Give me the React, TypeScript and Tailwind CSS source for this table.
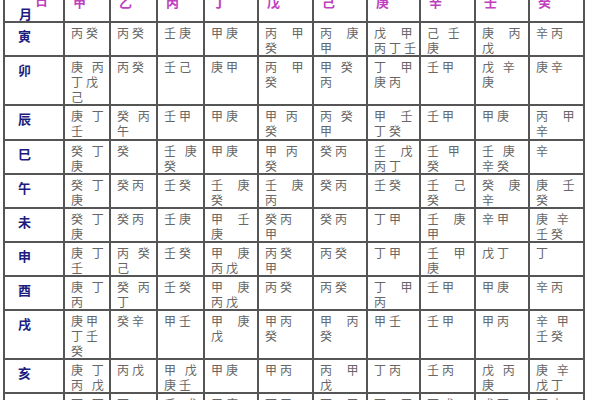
const HEADS = ['甲', '乙', '丙', '丁', '戊', '己', '庚', '辛', '壬', '癸'];

const COL_WIDTHS = [60, 46, 47, 47, 54, 55, 54, 53, 55, 54, 55];

type Row = { branch: string; height: number; cells: string[][] };

// '  ' = wide gap, ' ' = small gap
const ROWS: Row[] = [
  { branch: '寅', height: 33, cells: [['丙癸'], ['丙癸'], ['壬庚'], ['甲庚'], ['丙  甲', '癸'], ['丙  庚', '甲'], ['戊  甲', '丙丁壬'], ['己 壬', '庚'], ['庚  丙', '戊'], ['辛丙']] },
  { branch: '卯', height: 49, cells: [['庚 丙', '丁戊', '己'], ['丙癸'], ['壬己'], ['庚甲'], ['丙  甲', '癸'], ['甲 癸', '丙'], ['丁  甲', '庚丙'], ['壬甲'], ['戊 辛', '庚'], ['庚辛']] },
  { branch: '辰', height: 35, cells: [['庚 丁', '壬'], ['癸 丙', '午'], ['壬甲'], ['甲庚'], ['甲 丙', '癸'], ['丙 癸', '甲'], ['甲  壬', '丁癸'], ['壬甲'], ['甲庚'], ['丙  甲', '辛']] },
  { branch: '巳', height: 33, cells: [['癸 丁', '庚'], ['癸'], ['壬 庚', '癸'], ['甲庚'], ['甲 丙', '癸'], ['癸丙'], ['壬  戊', '丙丁'], ['壬 甲', '癸'], ['壬 庚', '辛癸'], ['辛']] },
  { branch: '午', height: 34, cells: [['癸 丁', '庚'], ['癸丙'], ['壬癸'], ['壬  庚', '癸'], ['壬  庚', '丙'], ['癸丙'], ['壬癸'], ['壬  己', '癸'], ['癸  庚', '辛'], ['庚  壬', '癸']] },
  { branch: '未', height: 33, cells: [['癸 丁', '庚'], ['癸丙'], ['壬庚'], ['甲  壬', '庚'], ['癸丙', '甲'], ['癸丙'], ['丁甲'], ['壬  庚', '甲'], ['辛甲'], ['庚 辛', '壬癸']] },
  { branch: '申', height: 33, cells: [['庚 丁', '壬'], ['丙 癸', '己'], ['壬癸'], ['甲  庚', '丙戊'], ['丙癸', '甲'], ['丙癸'], ['丁甲'], ['壬  甲', '庚'], ['戊丁'], ['丁']] },
  { branch: '酉', height: 34, cells: [['庚 丁', '丙'], ['癸 丙', '丁'], ['壬癸'], ['甲  庚', '丙戊'], ['丙癸'], ['丙癸'], ['丁  甲', '丙'], ['壬甲'], ['甲庚'], ['辛丙']] },
  { branch: '戌', height: 49, cells: [['庚甲', '丁壬', '癸'], ['癸辛'], ['甲壬'], ['甲  庚', '戊'], ['甲丙', '癸'], ['甲  丙', '癸'], ['甲壬'], ['壬甲'], ['甲丙'], ['辛 甲', '壬癸']] },
  { branch: '亥', height: 34, cells: [['庚 丁', '丙 戊'], ['丙戊'], ['甲 戊', '庚壬'], ['甲庚'], ['甲丙'], ['丙  甲', '戊'], ['丁丙'], ['壬丙'], ['戊 丙', '庚'], ['庚 辛', '戊丁']] },
  { branch: '子', height: 40, cells: [['丁 丙', '庚'], ['丙'], ['壬 戊'], ['甲庚'], ['丙甲'], ['丙  甲'], ['丁  甲'], ['丙戊'], ['戊丙'], ['丙辛']] },
];

const cellBorder = 'border-2 border-[#555]';

export default function App() {
  return (
    <div
      className="w-[600px] h-[400px] overflow-hidden bg-white pl-[3px]"
      style={{ fontFamily: '"Noto Sans CJK SC", "Noto Sans", sans-serif' }}
    >
      <table className="-mt-[12px] table-fixed border-collapse w-[580px]">
        <colgroup>
          {COL_WIDTHS.map((w, i) => (
            <col key={i} style={{ width: w }} />
          ))}
        </colgroup>
        <thead>
          <tr className="h-[31px]">
            <th className={`${cellBorder} align-top p-0 pt-[3px] pl-[14px] text-left font-bold text-[13px] leading-[14px]`}>
              <div className="pl-[16px] text-[#c040c0]">日</div>
              <div className="text-[#1c1c80]">月</div>
            </th>
            {HEADS.map((h) => (
              <th
                key={h}
                className={`${cellBorder} align-top p-0 pt-[5px] pl-[8px] text-left font-bold text-[13px] leading-[14px] text-[#c040c0]`}
              >
                {h}
              </th>
            ))}
          </tr>
        </thead>
        <tbody>
          {ROWS.map((row) => (
            <tr key={row.branch} style={{ height: row.height }}>
              <td className={`${cellBorder} align-top p-0 pt-[5px] pl-[13px] font-bold text-[13px] leading-[16px] text-[#1c1c80]`}>
                {row.branch}
              </td>
              {row.cells.map((lines, i) => (
                <td
                  key={i}
                  className={`${cellBorder} align-top p-0 pt-[2px] pl-[6px] text-[12px] leading-[15px] tracking-[3px] text-[#666] whitespace-pre overflow-hidden`}
                >
                  {lines.map((l, j) => (
                    <div key={j}>{l}</div>
                  ))}
                </td>
              ))}
            </tr>
          ))}
        </tbody>
      </table>
    </div>
  );
}
